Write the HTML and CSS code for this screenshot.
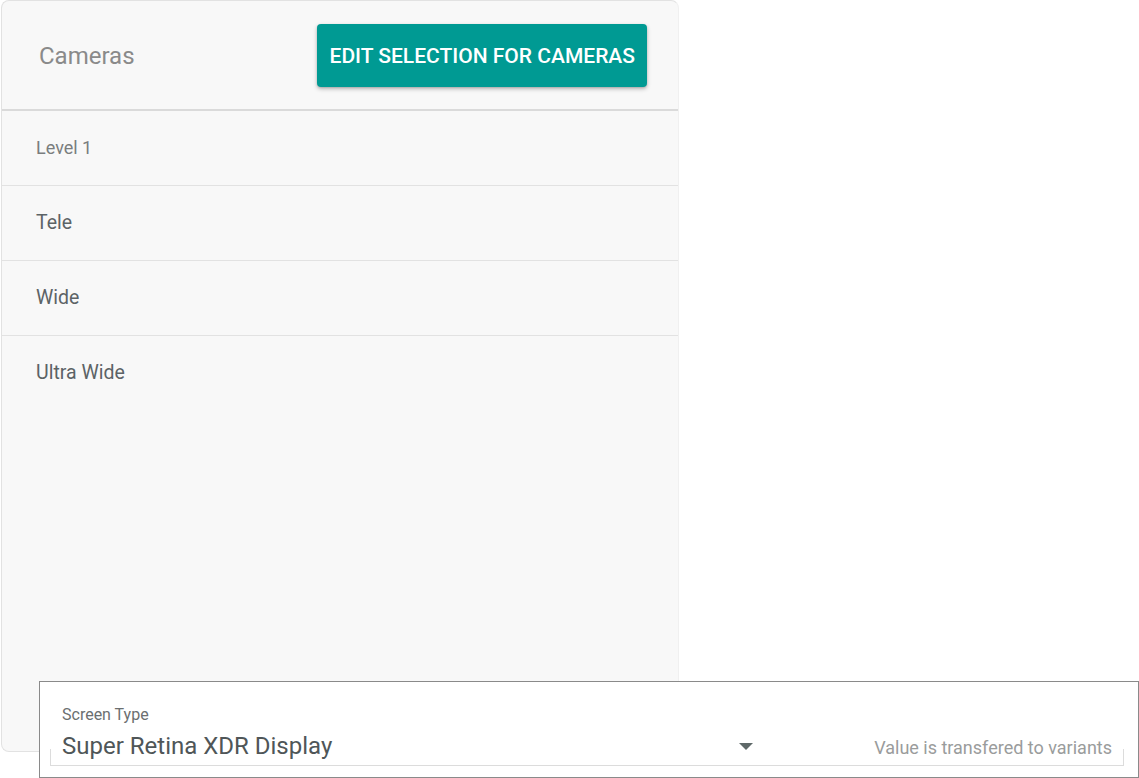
FILE: index.html
```html
<!DOCTYPE html>
<html lang="en">
<head>
<meta charset="utf-8">
<title>Cameras</title>
<link rel="stylesheet" href="styles.css">
</head>
<body>
<div class="card">
  <div class="card-header">
    <span class="card-title">Cameras</span>
    <button class="btn-edit" type="button">EDIT SELECTION FOR CAMERAS</button>
  </div>
  <div class="row row-level">Level 1</div>
  <div class="row">Tele</div>
  <div class="row">Wide</div>
  <div class="row row-last">Ultra Wide</div>
</div>

<div class="overlay">
  <div class="field">
    <div class="field-label">Screen Type</div>
    <div class="field-row">
      <div class="select">
        <span class="select-value">Super Retina XDR Display</span>
        <span class="select-arrow"></span>
      </div>
      <span class="field-hint">Value is transfered to variants</span>
    </div>
  </div>
</div>
</body>
</html>
```

FILE: styles.css
```css
* { box-sizing: border-box; }

html, body {
  margin: 0;
  padding: 0;
  background: #ffffff;
  font-family: Roboto, "Liberation Sans", Arial, sans-serif;
}

body {
  position: relative;
  width: 1139px;
  height: 778px;
  overflow: hidden;
}

.card {
  margin-left: 1px;
  width: 678px;
  height: 752px;
  background: #f8f8f8;
  border: 1px solid #e2e2e2;
  border-right-color: #f0f0f0;
  border-radius: 8px;
  display: flex;
  flex-direction: column;
}

.card-header {
  height: 110px;
  border-bottom: 2px solid #dadada;
  display: flex;
  align-items: center;
  justify-content: space-between;
  padding: 1px 31px 0 37px;
  flex-shrink: 0;
}

.card-title {
  font-size: 24px;
  color: #8a8a8a;
  font-weight: 400;
  margin-top: 1px;
}

.btn-edit {
  height: 63px;
  padding: 0 12px 0 13px;
  border: none;
  border-radius: 4px;
  background: #009a93;
  color: #ffffff;
  font-family: Roboto, "Liberation Sans", Arial, sans-serif;
  font-size: 21px;
  font-weight: 500;
  letter-spacing: 0;
  box-shadow: 0 2px 4px rgba(0,0,0,0.25), 0 1px 2px rgba(0,0,0,0.12);
}

.row {
  height: 75px;
  border-bottom: 1px solid #e2e2e2;
  display: flex;
  align-items: center;
  padding-left: 34px;
  padding-bottom: 2px;
  font-size: 19.5px;
  color: #5c6366;
  flex-shrink: 0;
}

.row-level {
  font-size: 18px;
  font-weight: 400;
  color: #7a7d7e;
}

.row-last {
  border-bottom: none;
}

.overlay {
  position: absolute;
  left: 39px;
  top: 681px;
  width: 1100px;
  height: 97px;
  background: #ffffff;
  border: 1px solid #8a8a8a;
  padding: 0 14px 11px 10px;
  display: flex;
  flex-direction: column;
  justify-content: flex-end;
}

.field {
  position: relative;
  border-bottom: 1px solid #dcdcdc;
  padding: 0 12px 5px 12px;
}

.field::before,
.field::after {
  content: "";
  position: absolute;
  bottom: 0;
  width: 1px;
  height: 16px;
  background: #dcdcdc;
}

.field::before { left: 0; }
.field::after { right: 0; }

.field-label {
  font-size: 16px;
  line-height: 19px;
  color: #6b6f70;
  margin-bottom: 8px;
}

.field-row {
  display: flex;
  align-items: baseline;
}

.select {
  width: 703px;
  display: flex;
  align-items: center;
  justify-content: space-between;
  flex-shrink: 0;
}

.select-value {
  font-size: 24px;
  line-height: 28px;
  color: #4f5658;
}

.select-arrow {
  width: 0;
  height: 0;
  border-left: 7px solid transparent;
  border-right: 7px solid transparent;
  border-top: 7px solid #5f6969;
  margin-right: 12px;
  margin-top: 0;
}

.field-hint {
  flex: 1;
  text-align: right;
  font-size: 18px;
  color: #9a9c9c;
}
```
